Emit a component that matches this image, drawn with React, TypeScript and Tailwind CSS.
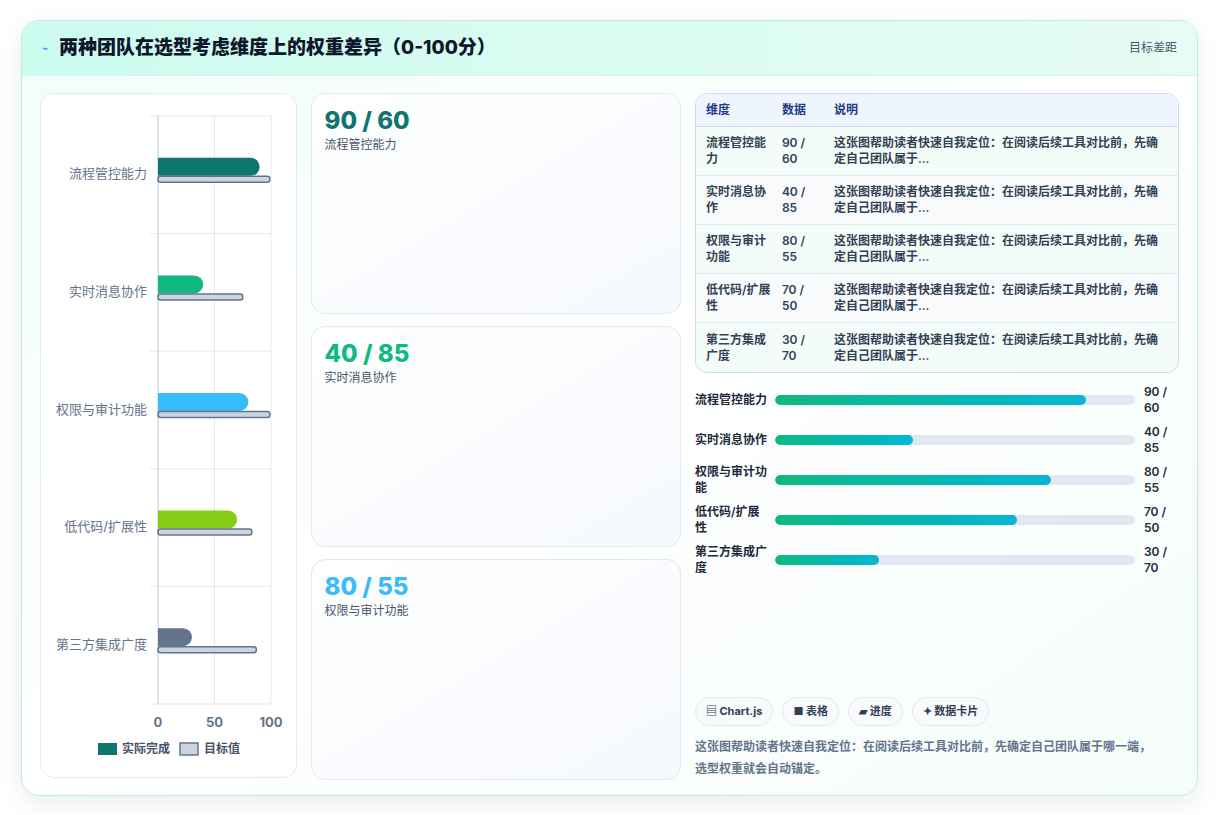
import React from 'react';

const rows = [
  { name: '流程管控能力', a: 90, b: 60, t: 99, color: '#0f766e', text: 'text-[#0f766e]' },
  { name: '实时消息协作', a: 40, b: 85, t: 75, color: '#10b981', text: 'text-[#10b981]' },
  { name: '权限与审计功能', a: 80, b: 55, t: 99, color: '#38bdf8', text: 'text-[#38bdf8]' },
  { name: '低代码/扩展性', a: 70, b: 50, t: 83, color: '#84cc16', text: 'text-[#84cc16]' },
  { name: '第三方集成广度', a: 30, b: 70, t: 87, color: '#64748b', text: 'text-[#64748b]' },
];

const tableNames = [['流程管控能', '力'], ['实时消息协', '作'], ['权限与审计', '功能'], ['低代码/扩展', '性'], ['第三方集成', '广度']];
const desc = '这张图帮助读者快速自我定位：在阅读后续工具对比前，先确定自己团队属于...';

function Chart() {
  const x0 = 117, scale = 1.13, top = 22, rowH = 117.6;
  return (
    <svg width="256" height="684" className="block">
      {[0, 50, 100].map(v => (
        <line key={v} x1={x0 + v * scale} x2={x0 + v * scale} y1={top} y2={top + 588} stroke="#e2e8f0" />
      ))}
      {[0, 1, 2, 3, 4, 5].map(i => (
        <line key={i} x1={x0 - 8} x2={x0 + 113} y1={top + i * rowH} y2={top + i * rowH} stroke="#e5e7eb" />
      ))}
      <line x1={x0} x2={x0} y1={top} y2={top + 588} stroke="#cbd5e1" />
      {rows.map((r, i) => {
        const cy = top + i * rowH + rowH / 2;
        return (
          <g key={r.name}>
            <text x={106} y={cy} textAnchor="end" fontSize="13" fill="#64748b" dominantBaseline="middle">{r.name}</text>
            <path d={`M${x0} ${cy - 17} H${x0 + r.a * scale - 9} A9 9 0 0 1 ${x0 + r.a * scale} ${cy - 8} V${cy - 8} A9 9 0 0 1 ${x0 + r.a * scale - 9} ${cy + 1} H${x0} Z`} fill={r.color} />
            <rect x={x0} y={cy + 1.5} width={r.t * scale} height={6} rx={2.5} fill="#cbd5e1" stroke="#64748b" strokeWidth="1.5" />
          </g>
        );
      })}
      {[0, 50, 100].map(v => (
        <text key={v} x={x0 + v * scale} y={633} textAnchor="middle" fontSize="13" fontWeight="700" fill="#64748b">{v}</text>
      ))}
      <rect x={57} y={649} width={19} height={12} fill="#0f766e" />
      <text x={81} y={659} fontSize="12" fill="#475569" fontWeight="600">实际完成</text>
      <rect x={139} y={649} width={18} height={12} fill="#cbd5e1" stroke="#64748b" strokeWidth="1.5" />
      <text x={163} y={659} fontSize="12" fill="#475569" fontWeight="600">目标值</text>
    </svg>
  );
}

export default function App() {
  return (
    <div className="w-[1219px] h-[815px] bg-white p-[20px] pl-[21px] pr-[21px]" style={{ fontFamily: 'Inter, "Noto Sans CJK SC", sans-serif' }}>
      <div className="h-[776px] rounded-[18px] border border-[#b9eedd] bg-gradient-to-br from-[#f0fdf8] via-white to-[#f5fdfb] shadow-[0_8px_24px_rgba(15,23,42,0.08)] overflow-hidden flex flex-col">
        <div className="h-[55px] shrink-0 flex items-center justify-between px-[20px] bg-gradient-to-r from-[#ccfbef] to-[#e6fcf5] border-b border-[#d5f3ea]">
          <div className="flex items-center gap-[10px]">
            <span className="text-[#3b82f6] text-[11px]">⌁</span>
            <span className="text-[19px] font-extrabold text-[#0f172a]">两种团队在选型考虑维度上的权重差异（0-100分）</span>
          </div>
          <span className="text-[12px] text-[#475569]">目标差距</span>
        </div>
        <div className="flex gap-[14px] px-[18px] pt-[17px]">
          <div className="w-[257px] h-[685px] rounded-[14px] border border-[#e5eaf0] bg-white overflow-hidden">
            <Chart />
          </div>
          <div className="w-[371px] flex flex-col gap-[12px]">
            {rows.slice(0, 3).map(r => (
              <div key={r.name} className="h-[221px] rounded-[14px] border border-[#e2e8f0] bg-gradient-to-br from-white to-[#f5f8fd] px-[13px] pt-[9px]">
                <div className={`text-[24px] font-extrabold ${r.text}`}>{r.a} / {r.b}</div>
                <div className="text-[12px] text-[#475569] -mt-[3px]">{r.name}</div>
              </div>
            ))}
          </div>
          <div className="w-[485px] flex flex-col">
            <div className="rounded-[12px] border border-[#cfdbe8] overflow-hidden text-[12px]">
              <div className="h-[33px] flex items-center bg-[#eef5ff] border-b border-[#cfdbe8] text-[#1e3a8a] font-semibold">
                <div className="w-[86px] pl-[10px]">维度</div>
                <div className="w-[52px]">数据</div>
                <div>说明</div>
              </div>
              {rows.map((r, i) => (
                <div key={r.name} className={`h-[49px] flex items-center font-semibold text-[#334155] leading-[16px] ${i < 4 ? 'border-b border-[#e2e8f0]' : ''} ${i % 2 === 0 ? 'bg-[#f3fcf8]' : 'bg-[#f8fafc]'}`}>
                  <div className="w-[86px] pl-[10px]">{tableNames[i][0]}<br />{tableNames[i][1]}</div>
                  <div className="w-[52px]">{r.a} /<br />{r.b}</div>
                  <div className="flex-1 pr-[10px]">{desc}</div>
                </div>
              ))}
            </div>
            <div className="flex flex-col gap-[8px] mt-[11px]">
              {rows.map(r => (
                <div key={r.name} className="h-[32px] flex items-center text-[12px] font-semibold text-[#1e293b] leading-[16px]">
                  <div className="w-[80px] pr-[6px]">{r.name}</div>
                  <div className="w-[360px] h-[10px] rounded-full bg-[#e2e8f0] overflow-hidden">
                    <div className="h-full rounded-full bg-gradient-to-r from-[#10b981] to-[#06b6d4]" style={{ width: `${r.a * 0.96}%` }} />
                  </div>
                  <div className="pl-[9px] w-[40px]">{r.a} /<br />{r.b}</div>
                </div>
              ))}
            </div>
            <div className="flex-1" />
            <div className="flex gap-[9px] mt-auto">
              {['▤ Chart.js', '■ 表格', '▰ 进度', '✦ 数据卡片'].map(c => (
                <span key={c} className="h-[29px] px-[10px] flex items-center rounded-full border border-[#e2e8f0] bg-[#f8fafc] text-[11px] font-bold text-[#334155]">{c}</span>
              ))}
            </div>
            <p className="mt-[10px] text-[12px] leading-[22px] font-semibold text-[#64748b] pr-[20px]">这张图帮助读者快速自我定位：在阅读后续工具对比前，先确定自己团队属于哪一端，选型权重就会自动锚定。</p>
          </div>
        </div>
      </div>
    </div>
  );
}
